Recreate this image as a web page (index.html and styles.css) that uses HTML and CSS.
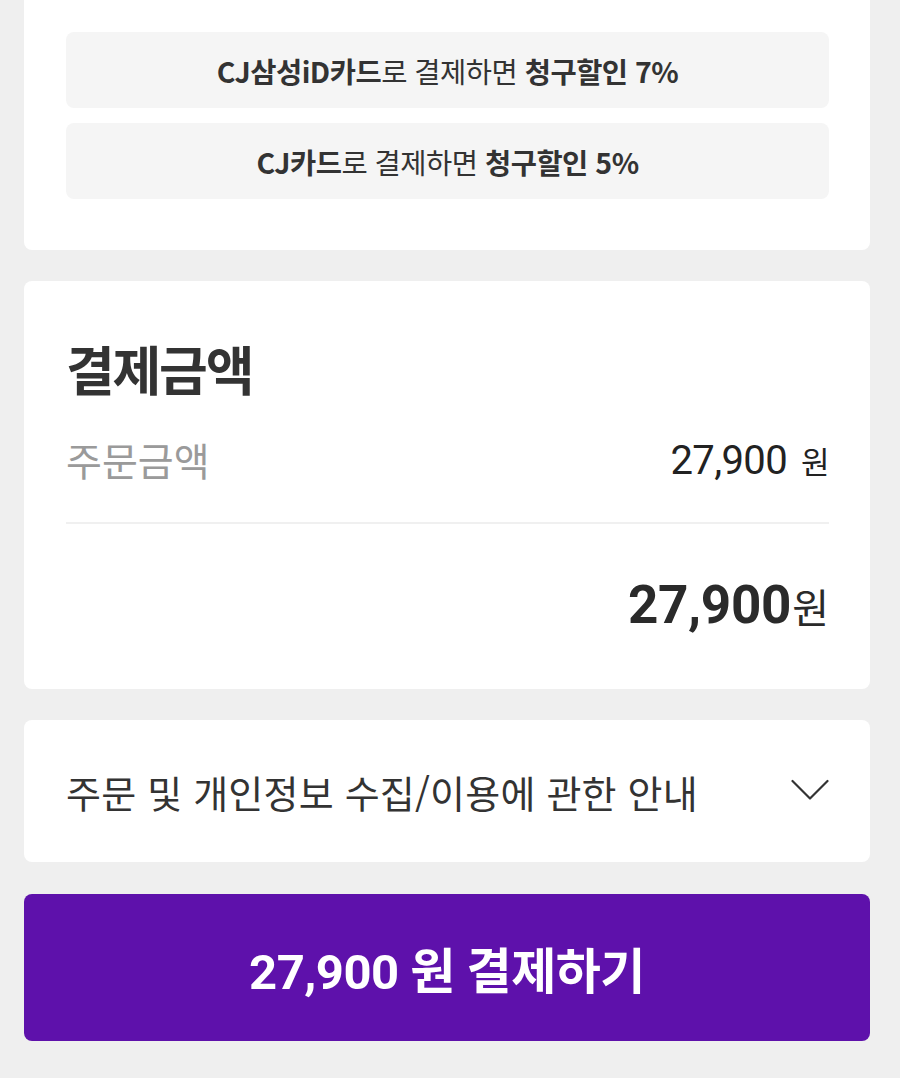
FILE: index.html
```html
<!DOCTYPE html>
<html lang="ko">
<head>
<meta charset="utf-8">
<title>결제</title>
<link rel="stylesheet" href="styles.css">
</head>
<body>
<div class="page">
  <section class="card card-benefit">
    <div class="benefit"><b>CJ삼성iD카드</b>로 결제하면 <b>청구할인 7%</b></div>
    <div class="benefit"><b>CJ카드</b>로 결제하면 <b>청구할인 5%</b></div>
  </section>

  <section class="card card-pay">
    <h2 class="pay-title">결제금액</h2>
    <div class="row">
      <span class="label">주문금액</span>
      <span class="amount">27,900<span class="won">원</span></span>
    </div>
    <div class="divider"></div>
    <div class="total">
      <span class="total-num">27,900</span><span class="total-won">원</span>
    </div>
  </section>

  <section class="card card-notice">
    <span class="notice-text">주문 및 개인정보 수집/이용에 관한 안내</span>
    <svg class="chevron" width="38" height="22" viewBox="0 0 38 22" aria-hidden="true">
      <path d="M1.5 2 L19 19.5 L36.5 2" fill="none" stroke="#333" stroke-width="2.2" stroke-linecap="round" stroke-linejoin="round"/>
    </svg>
  </section>

  <button class="pay-btn">27,900 원 결제하기</button>
</div>
</body>
</html>
```

FILE: styles.css
```css
* { box-sizing: border-box; }

html, body {
  margin: 0;
  padding: 0;
  background: #efefef;
}

body {
  font-family: Roboto, "Noto Sans CJK KR", sans-serif;
  color: #333;
}

.page {
  display: flex;
  flex-direction: column;
  padding: 0 30px 0 24px;
  gap: 31px;
}

.card {
  background: #fff;
  border-radius: 8px;
  padding-left: 42px;
  padding-right: 41px;
}

.card-benefit {
  border-radius: 0 0 8px 8px;
  padding-top: 32px;
  padding-bottom: 51px;
  display: flex;
  flex-direction: column;
  gap: 15px;
}

.benefit {
  height: 76px;
  background: #f5f5f5;
  border-radius: 8px;
  display: flex;
  align-items: center;
  justify-content: center;
  font-family: "Noto Sans CJK KR", sans-serif;
  font-size: 28.5px;
  letter-spacing: -0.5px;
  color: #333;
  white-space: pre;
}

.benefit b {
  font-weight: 700;
}

.card-pay {
  padding-top: 56px;
  padding-bottom: 55px;
}

.pay-title {
  margin: 0;
  font-family: "Noto Sans CJK KR", sans-serif;
  font-weight: 700;
  font-size: 53px;
  line-height: 62px;
  letter-spacing: -2.2px;
  color: #333;
}

.row {
  margin-top: 38px;
  display: flex;
  justify-content: space-between;
  align-items: center;
  height: 44px;
}

.label {
  font-family: "Noto Sans CJK KR", sans-serif;
  font-size: 39px;
  letter-spacing: 0;
  color: #9a9a9a;
}

.amount {
  font-size: 40px;
  color: #222;
  letter-spacing: -0.6px;
  margin-top: 3px;
}

.won {
  font-family: "Noto Sans CJK KR", sans-serif;
  font-size: 31px;
  margin-left: 14px;
}

.divider {
  margin-top: 41px;
  height: 2px;
  background: #f0f0f0;
}

.total {
  margin-top: 50px;
  height: 60px;
  display: flex;
  justify-content: flex-end;
  align-items: baseline;
  color: #2a2a2a;
}

.total-num {
  font-weight: 700;
  font-size: 53px;
  letter-spacing: -0.3px;
}

.total-won {
  font-family: "Noto Sans CJK KR", sans-serif;
  font-size: 40px;
  margin-left: 1px;
}

.card-notice {
  height: 142px;
  display: flex;
  align-items: center;
  justify-content: space-between;
}

.notice-text {
  font-family: "Noto Sans CJK KR", sans-serif;
  font-size: 38px;
  color: #333;
  letter-spacing: 0.2px;
}

.chevron {
  display: block;
  margin-top: -2px;
}

.pay-btn {
  margin-top: 1px;
  height: 147px;
  width: 100%;
  border: 0;
  border-radius: 8px;
  background: #5e11ab;
  color: #fff;
  font-family: Roboto, "Noto Sans CJK KR", sans-serif;
  font-weight: 700;
  font-size: 49px;
  letter-spacing: -0.5px;
  padding: 0;
}
```
